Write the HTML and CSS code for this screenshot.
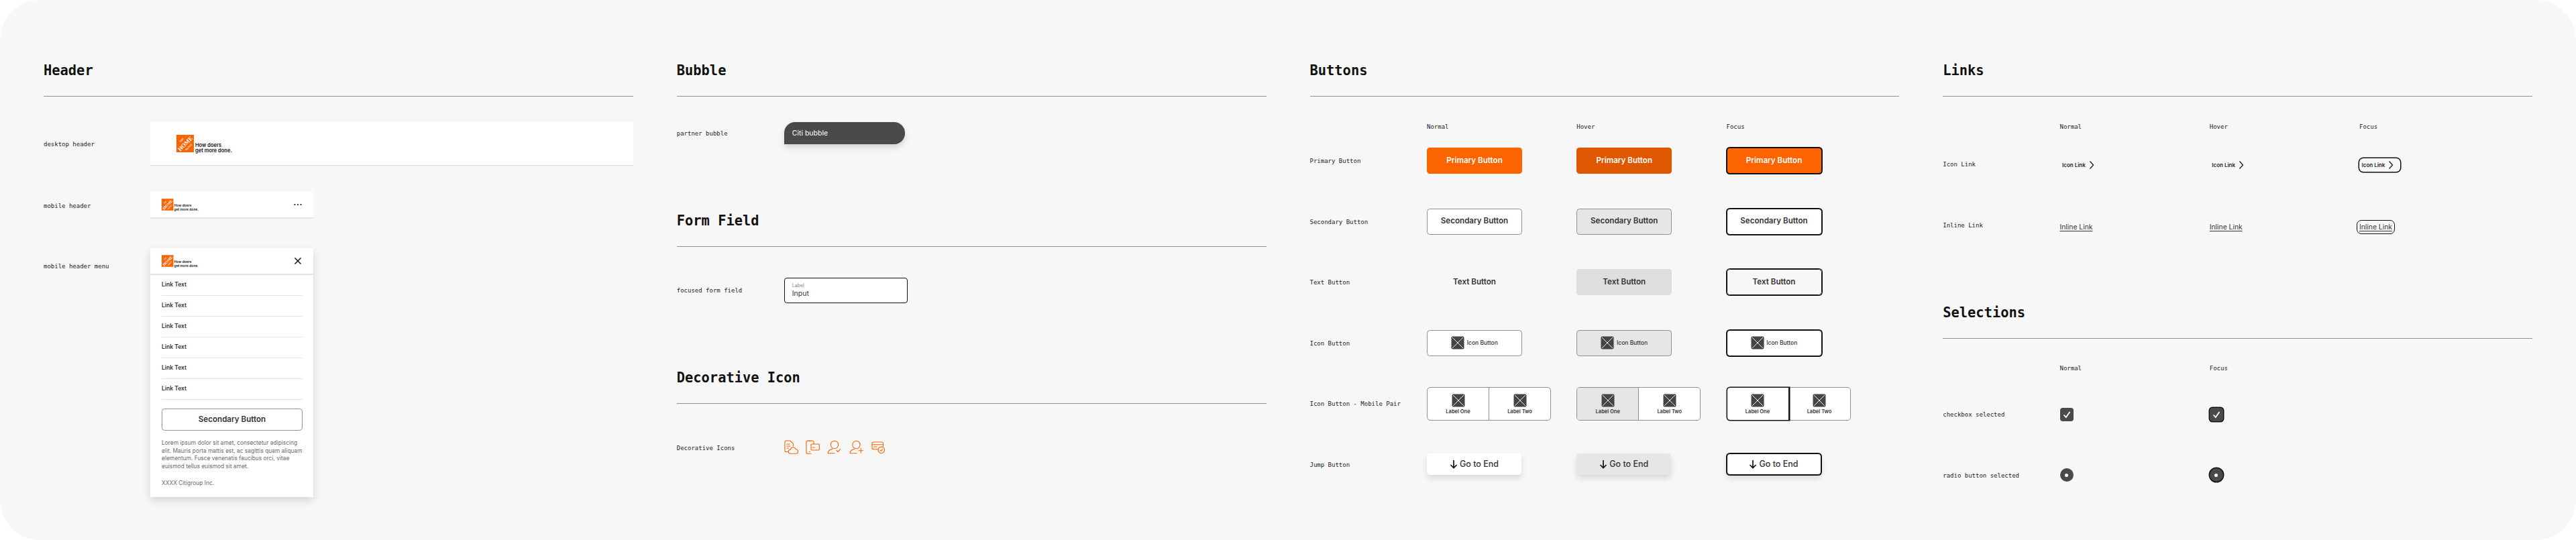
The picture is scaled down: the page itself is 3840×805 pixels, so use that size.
FILE: index.html
```html
<!DOCTYPE html>
<html lang="en">
<head>
<meta charset="utf-8">
<title>Component sheet</title>
<link rel="stylesheet" href="styles.css">
</head>
<body>
<svg class="defs" aria-hidden="true">
  <symbol id="x-box" viewBox="0 0 20 20">
    <rect x=".5" y=".5" width="19" height="19" rx="2" fill="#444"/>
    <path d="M2 2 18 18M18 2 2 18" stroke="#fff" stroke-width=".9"/>
  </symbol>
  <symbol id="arrow" viewBox="0 0 12 14">
    <path d="M6 1v11.5M1.5 8 6 12.5 10.5 8" fill="none" stroke="#111" stroke-width="1.7"/>
  </symbol>
  <symbol id="chev" viewBox="0 0 8 14">
    <path d="M1.5 1.5 6.5 7 1.5 12.5" fill="none" stroke="#222" stroke-width="1.4"/>
  </symbol>
</svg>

<main class="board">

  <section class="col">
    <header class="sec-head"><h2>Header</h2></header>
    <div class="hdr-list">
      <div class="hdr-row">
        <span class="label">desktop header</span>
        <div class="desk-header">
          <div class="brand">
            <svg class="logo-lg" viewBox="0 0 26 26"><rect width="26" height="26" fill="#f96302"/><g class="logo-type" transform="rotate(-45 13 13)"><text x="13" y="7" font-size="3.600">THE</text><text x="13" y="16.200" font-size="8.600">HOME</text><text x="13" y="21.800" font-size="3.800">DEPOT</text></g></svg>
            <span class="tag-lg">How doers<br>get more done.</span>
          </div>
        </div>
      </div>
      <div class="hdr-row">
        <span class="label">mobile header</span>
        <div class="mob-header">
          <div class="brand">
            <svg class="logo-sm" viewBox="0 0 26 26"><rect width="26" height="26" fill="#f96302"/><g class="logo-type" transform="rotate(-45 13 13)"><text x="13" y="7" font-size="3.600">THE</text><text x="13" y="16.200" font-size="8.600">HOME</text><text x="13" y="21.800" font-size="3.800">DEPOT</text></g></svg>
            <span class="tag-sm">How doers<br>get more done.</span>
          </div>
          <svg class="tool-ic" viewBox="0 0 14 14"><circle cx="2.500" cy="7" r="1.100"/><circle cx="7" cy="7" r="1.100"/><circle cx="11.500" cy="7" r="1.100"/></svg>
        </div>
      </div>
      <div class="hdr-row hdr-row-top">
        <span class="label label-menu">mobile header menu</span>
        <div class="mob-menu">
          <div class="mob-header mob-header-menu">
            <div class="brand">
              <svg class="logo-sm" viewBox="0 0 26 26"><rect width="26" height="26" fill="#f96302"/><g class="logo-type" transform="rotate(-45 13 13)"><text x="13" y="7" font-size="3.600">THE</text><text x="13" y="16.200" font-size="8.600">HOME</text><text x="13" y="21.800" font-size="3.800">DEPOT</text></g></svg>
              <span class="tag-sm">How doers<br>get more done.</span>
            </div>
            <svg class="tool-ic" viewBox="0 0 14 14"><path d="M2.500 2.500 11.500 11.500M11.500 2.500 2.500 11.500" stroke="#111" stroke-width="1.500" fill="none"/></svg>
          </div>
          <div class="menu-body">
            <a class="menu-link">Link Text</a>
            <a class="menu-link">Link Text</a>
            <a class="menu-link">Link Text</a>
            <a class="menu-link">Link Text</a>
            <a class="menu-link">Link Text</a>
            <a class="menu-link">Link Text</a>
            <button class="btn btn-secondary btn-menu">Secondary Button</button>
            <p class="legal">Lorem ipsum dolor sit amet, consectetur adipiscing elit. Mauris porta mattis est, ac sagittis quam aliquam elementum. Fusce venenatis faucibus orci, vitae euismod tellus euismod sit amet.</p>
            <p class="legal">XXXX Citigroup Inc.</p>
          </div>
        </div>
      </div>
    </div>
  </section>

  <section class="col">
    <header class="sec-head"><h2>Bubble</h2></header>
    <div class="row row-bubble">
      <span class="label">partner bubble</span>
      <div class="bubble">Citi bubble</div>
    </div>
    <header class="sec-head sec-form"><h2>Form Field</h2></header>
    <div class="row row-field">
      <span class="label">focused form field</span>
      <div class="field">
        <span class="field-label">Label</span>
        <span class="field-input">Input</span>
      </div>
    </div>
    <header class="sec-head sec-deco"><h2>Decorative Icon</h2></header>
    <div class="row row-deco">
      <span class="label">Decorative Icons</span>
      <div class="deco-icons">
        <svg class="deco" viewBox="0 0 22 22"><path d="M6.500 17.500H3a2 2 0 0 1-2-2V3a2 2 0 0 1 2-2h6l4.300 4.300V9M4 6h4M4 9h5M4 12h2.500"/><path d="M9.500 20.300a3 3 0 0 1-.4-6 4.300 4.300 0 0 1 8.200-.6 3.300 3.300 0 0 1 0 6.600z"/></svg>
        <svg class="deco" viewBox="0 0 22 22"><path d="M8 20.300H3a2 2 0 0 1-2-2V3a2 2 0 0 1 2-2h7a2 2 0 0 1 2 2v2.700M4.500 1.500h3M5.500 17.500h1"/><rect x="8" y="6" width="12.300" height="9" rx="1.200"/><path d="M10.500 11h3"/></svg>
        <svg class="deco" viewBox="0 0 22 22"><circle cx="11" cy="7" r="5.700"/><path d="M1.200 19.800v-.6c0-3 3-5 6.800-6M2 19.800h9M14 15.500l2 2 3.800-3.800"/></svg>
        <svg class="deco" viewBox="0 0 22 22"><circle cx="10.500" cy="7" r="5.700"/><path d="M1.200 19.800v-.6c0-3 3-5 6.800-6M2 19.800h9M17.300 12.500v6.500M14 15.800h6.500"/></svg>
        <svg class="deco" viewBox="0 0 22 22"><path d="M11 13.800H4a2 2 0 0 1-2-2V5a2 2 0 0 1 2-2h12.500a2 2 0 0 1 2 2v4.500M2 6.800h16.500M4.500 10h4.500"/><circle cx="15.800" cy="14.800" r="4.700"/><path d="M13.800 14.800l1.500 1.500 2.500-2.800"/></svg>
      </div>
    </div>
  </section>

  <section class="col">
    <header class="sec-head"><h2>Buttons</h2></header>
    <div class="matrix matrix-btn">
      <span></span>
      <span class="col-head">Normal</span>
      <span class="col-head">Hover</span>
      <span class="col-head">Focus</span>

      <span class="label">Primary Button</span>
      <div><button class="btn btn-primary">Primary Button</button></div>
      <div><button class="btn btn-primary is-hover">Primary Button</button></div>
      <div><button class="btn btn-primary is-focus">Primary Button</button></div>

      <span class="label">Secondary Button</span>
      <div><button class="btn btn-secondary">Secondary Button</button></div>
      <div><button class="btn btn-secondary is-hover">Secondary Button</button></div>
      <div><button class="btn btn-secondary is-focus">Secondary Button</button></div>

      <span class="label">Text Button</span>
      <div><button class="btn btn-text">Text Button</button></div>
      <div><button class="btn btn-text is-hover">Text Button</button></div>
      <div><button class="btn btn-text is-focus">Text Button</button></div>

      <span class="label">Icon Button</span>
      <div><button class="btn btn-secondary btn-icon"><svg class="x-ic"><use href="#x-box"/></svg>Icon Button</button></div>
      <div><button class="btn btn-secondary btn-icon is-hover"><svg class="x-ic"><use href="#x-box"/></svg>Icon Button</button></div>
      <div><button class="btn btn-secondary btn-icon is-focus"><svg class="x-ic"><use href="#x-box"/></svg>Icon Button</button></div>

      <span class="label">Icon Button - Mobile Pair</span>
      <div class="pair">
        <button class="pair-item"><svg class="x-ic"><use href="#x-box"/></svg>Label One</button>
        <button class="pair-item"><svg class="x-ic"><use href="#x-box"/></svg>Label Two</button>
      </div>
      <div class="pair">
        <button class="pair-item is-hover"><svg class="x-ic"><use href="#x-box"/></svg>Label One</button>
        <button class="pair-item"><svg class="x-ic"><use href="#x-box"/></svg>Label Two</button>
      </div>
      <div class="pair">
        <button class="pair-item is-focus"><svg class="x-ic"><use href="#x-box"/></svg>Label One</button>
        <button class="pair-item"><svg class="x-ic"><use href="#x-box"/></svg>Label Two</button>
      </div>

      <span class="label">Jump Button</span>
      <div><button class="btn btn-jump"><svg class="arrow"><use href="#arrow"/></svg>Go to End</button></div>
      <div><button class="btn btn-jump is-hover"><svg class="arrow"><use href="#arrow"/></svg>Go to End</button></div>
      <div><button class="btn btn-jump is-focus"><svg class="arrow"><use href="#arrow"/></svg>Go to End</button></div>
    </div>
  </section>

  <section class="col">
    <header class="sec-head"><h2>Links</h2></header>
    <div class="matrix matrix-link">
      <span></span>
      <span class="col-head">Normal</span>
      <span class="col-head">Hover</span>
      <span class="col-head">Focus</span>

      <span class="label">Icon Link</span>
      <div><a class="icon-link">Icon Link<svg class="chev"><use href="#chev"/></svg></a></div>
      <div><a class="icon-link">Icon Link<svg class="chev"><use href="#chev"/></svg></a></div>
      <div><a class="icon-link is-focus">Icon Link<svg class="chev"><use href="#chev"/></svg></a></div>

      <span class="label">Inline Link</span>
      <div><a class="inline-link">Inline Link</a></div>
      <div><a class="inline-link">Inline Link</a></div>
      <div><a class="inline-link is-focus">Inline Link</a></div>
    </div>

    <header class="sec-head sec-select"><h2>Selections</h2></header>
    <div class="matrix matrix-select">
      <span></span>
      <span class="col-head">Normal</span>
      <span class="col-head">Focus</span>
      <span></span>

      <span class="label">checkbox selected</span>
      <div><span class="check"><svg viewBox="0 0 20 20"><path d="M5.500 10.500 8.800 14 14.500 6"/></svg></span></div>
      <div><span class="check is-focus"><svg viewBox="0 0 20 20"><path d="M5.500 10.500 8.800 14 14.500 6"/></svg></span></div>
      <span></span>

      <span class="label">radio button selected</span>
      <div><span class="radio"><i class="dot"></i></span></div>
      <div><span class="radio is-focus"><i class="dot"></i></span></div>
      <span></span>
    </div>
  </section>

</main>
</body>
</html>
```

FILE: styles.css
```css
* { box-sizing: border-box; }

html, body { margin: 0; padding: 0; background: #fff; }

body { font-family: "Inter", "Liberation Sans", sans-serif; color: #333; overflow: hidden; height: 805px; }

.defs { display: block; width: 0; height: 0; overflow: hidden; }

.board {
  width: 3840px;
  height: 805px;
  background: #f7f7f7;
  border-radius: 60px;
  padding: 90px 65px 0;
  display: grid;
  grid-template-columns: repeat(4, 1fr);
  column-gap: 65px;
}

.col { min-width: 0; }

.sec-head {
  height: 54px;
  border-bottom: 1.5px solid #8f8f8f;
}

.sec-head h2 {
  margin: 0;
  font: 700 20.4px/30px "DejaVu Sans Mono", "Liberation Mono", monospace;
  color: #111;
}

.sec-form { margin-top: 99px; }
.sec-deco { margin-top: 96.5px; }
.sec-select { margin-top: 70px; }

.label, .col-head {
  font: 400 9px/11px "DejaVu Sans Mono", "Liberation Mono", monospace;
  color: #222;
  white-space: nowrap;
}
.label { padding-top: 2px; }

/* Header column */
.hdr-list { display: flex; flex-direction: column; padding-top: 38px; gap: 39px; }
.hdr-row { display: grid; grid-template-columns: 159px 1fr; align-items: center; }
.hdr-row-top { align-items: start; margin-top: 5px; }
.label-menu { margin-top: 20px; }

.desk-header {
  height: 65px;
  background: #fff;
  border-bottom: 1px solid #ddd;
  padding-left: 39px;
  display: flex;
  align-items: center;
}

.brand { display: flex; align-items: flex-end; }

.logo-lg { width: 26px; height: 26px; display: block; }
.logo-sm { width: 17.500px; height: 18px; display: block; }
.logo-type { fill: #fff; font-family: "Liberation Serif", serif; font-weight: 700; text-anchor: middle; }

.tag-lg {
  font-size: 7.5px; line-height: 8px; font-weight: 600; color: #111;
  margin: 0 0 -2px 2px; white-space: nowrap;
}
.tag-sm {
  font-size: 5px; line-height: 5.5px; font-weight: 600; color: #111;
  margin: 0 0 -1px 1px; white-space: nowrap;
}

.mob-header {
  width: 243px;
  height: 40px;
  background: #fff;
  border-bottom: 2px solid #e3e3e3;
  padding: 0 16px 0 17px;
  display: flex;
  align-items: center;
  justify-content: space-between;
}
.mob-header-menu { padding-right: 16px; }

.tool-ic { width: 14px; height: 14px; fill: #111; display: block; }

.mob-menu {
  width: 243px;
  background: #fff;
  box-shadow: 0 5px 12px rgba(0, 0, 0, .14);
}

.menu-body { padding: 0 16px 15px 17px; display: flex; flex-direction: column; }

.menu-link {
  height: 31px;
  flex: none;
  border-bottom: 1px solid #e3e3e3;
  font-size: 8.5px;
  font-weight: 600;
  line-height: 29px;
  color: #333;
}

.legal {
  margin: 13px 0 0;
  font-size: 8.4px;
  line-height: 11.67px;
  color: #6b6b6b;
}

/* Bubble / field / icons */
.row { display: grid; grid-template-columns: 160px 1fr; align-items: center; }
.row-bubble { margin-top: 38px; }
.row-field { margin-top: 45.5px; }
.row-deco { margin-top: 54px; }

.bubble {
  width: 180px;
  height: 33px;
  background: #4a4a4a;
  color: #fff;
  font-size: 10.5px;
  line-height: 33px;
  padding-left: 12px;
  border-radius: 16px 16px 16px 0;
  box-shadow: 0 5px 10px rgba(0, 0, 0, .14);
}

.field {
  width: 184px;
  height: 38px;
  background: #fff;
  border: 1.500px solid #111;
  border-radius: 4px;
  padding: 6px 11px 0;
  display: flex;
  flex-direction: column;
}
.field-label { font-size: 7px; line-height: 10px; color: #888; }
.field-input { font-size: 10.5px; line-height: 14px; color: #333; }

.deco-icons { display: flex; gap: 10.300px; }
.deco {
  width: 22px;
  height: 22px;
  display: block;
  fill: none;
  stroke: #f96302;
  stroke-width: 1.1;
  stroke-linecap: round;
  stroke-linejoin: round;
}

/* Matrices */
.matrix { display: grid; align-items: center; }
.matrix-btn {
  grid-template-columns: 174.500px 223.250px 223.250px 1fr;
  grid-template-rows: 50.200px repeat(6, 90.600px);
}
.matrix-link {
  grid-template-columns: 174.250px 223.250px 223.250px 1fr;
  grid-template-rows: 55.700px repeat(2, 90.600px);
}
.matrix-select {
  grid-template-columns: 174.250px 223.250px 223.250px 1fr;
  grid-template-rows: 67.700px repeat(2, 90.600px);
}
.col-head { align-self: start; padding-top: 40px; line-height: 10px; box-sizing: content-box; }
.matrix-select .col-head { padding-top: 39px; }

/* Buttons */
.btn {
  width: 142px;
  height: 39px;
  margin: 0;
  padding: 0;
  border: 1px solid transparent;
  border-radius: 4.500px;
  background: transparent;
  color: #333;
  font: 600 11.600px/1 "Inter", "Liberation Sans", sans-serif;
  display: flex;
  align-items: center;
  justify-content: center;
}

.btn-primary { background: #fc6400; color: #fff; }
.btn-primary.is-hover { background: #df5800; }

.btn-secondary { background: #fff; border-color: #8f8f8f; }
.btn-secondary.is-hover { background: #e6e6e6; }
.btn-secondary.btn-menu { width: 210px; height: 33px; margin: 13px 0 0; flex: none; }

.btn-text.is-hover { background: #dedede; }

.btn.is-focus {
  border-color: #111;
  box-shadow: 0 0 0 1px #111, 0 0 0 2px #fff;
}
.btn-secondary.is-focus, .btn-jump.is-focus { background: #fff; }

.btn-icon { font-size: 8.500px; font-weight: 500; gap: 3.500px; }
.x-ic { width: 20px; height: 20px; display: block; flex: none; }

.pair {
  width: 185px;
  height: 50px;
  display: flex;
  background: #fff;
  border: 1px solid #8f8f8f;
  border-radius: 5px;
}

.pair-item {
  flex: 1;
  margin: 0;
  padding: 9px 0 0;
  border: 0;
  background: transparent;
  color: #333;
  font: 600 7.500px/1 "Inter", "Liberation Sans", sans-serif;
  display: flex;
  flex-direction: column;
  align-items: center;
  gap: 3px;
}
.pair-item:first-child { border-right: 1px solid #8f8f8f; border-radius: 4px 0 0 4px; }
.pair-item.is-hover { background: #e6e6e6; }
.pair-item.is-focus {
  border-right-color: #111;
  box-shadow: 0 0 0 1.500px #111;
  position: relative;
}

.btn-jump {
  height: 32px;
  width: 141px;
  background: #fff;
  font-size: 12.500px;
  font-weight: 500;
  gap: 3px;
  box-shadow: 0 5px 10px rgba(0, 0, 0, .12);
}
.btn-jump.is-hover { background: #e6e6e6; }
.btn.btn-jump.is-focus { box-shadow: 0 0 0 1px #111, 0 5px 10px rgba(0, 0, 0, .12); }
.arrow { width: 12px; height: 14px; display: block; }

/* Links */
.icon-link {
  display: inline-flex;
  align-items: center;
  gap: 5px;
  width: 61px;
  height: 20px;
  padding-left: 3.500px;
  font-size: 8px;
  font-weight: 600;
  color: #222;
  border-radius: 6px;
}
.chev { width: 8px; height: 14px; display: block; }
.icon-link.is-focus { box-shadow: 0 0 0 1.500px #111; }

.inline-link {
  display: inline-block;
  font-size: 10.300px;
  line-height: 13px;
  color: #333;
  text-decoration: underline;
  text-underline-offset: 1.500px;
  border-radius: 3px;
}
.inline-link.is-focus { outline: 1.500px solid #111; outline-offset: 3px; }

/* Selection controls */
.check, .radio {
  width: 20px;
  height: 20px;
  background: #4a4a4a;
  display: flex;
  align-items: center;
  justify-content: center;
}
.check { border-radius: 4px; }
.check svg { width: 20px; height: 20px; display: block; fill: none; stroke: #fff; stroke-width: 1.800; }
.radio { border-radius: 50%; }
.dot { width: 5px; height: 5px; border-radius: 50%; background: #fff; display: block; }
.check.is-focus, .radio.is-focus { box-shadow: 0 0 0 1.500px #111, 0 0 0 2.500px #fff; }
```
